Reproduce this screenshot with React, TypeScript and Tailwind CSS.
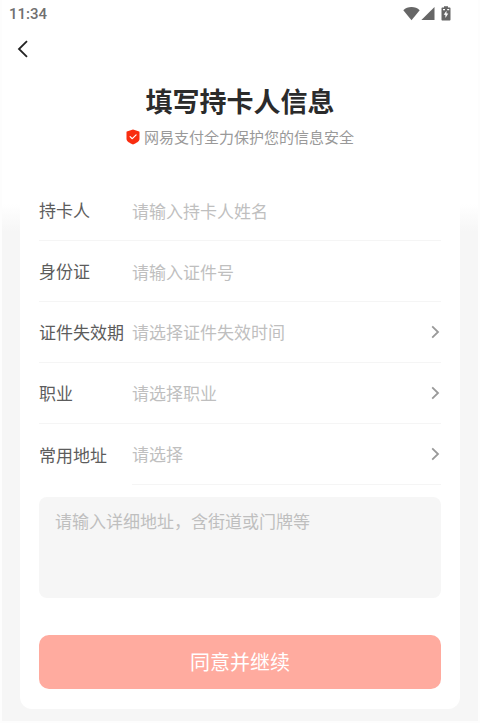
import { useState } from "react";
import type { ReactNode } from "react";

function StatusBar() {
  return (
    <div className="flex h-7 items-center justify-between pl-[7px] pr-[25px] text-[#666666]">
      <span className="font-[Roboto,sans-serif] text-[15px] leading-5 font-medium text-[#707070]">
        11:34
      </span>
      <div className="flex items-center gap-1">
        <div className="flex items-center gap-px">
          <svg className="h-[14px] w-[17px]" viewBox="0 0 17 14" fill="currentColor" aria-hidden="true">
            <path d="M8.5 13.2 0.3 3.2C2.4 1.2 5.3 0.1 8.5 0.1s6.100 1.100 8.200 3.100Z" />
          </svg>
          <svg className="h-[14px] w-[14px]" viewBox="0 0 14 14" fill="currentColor" aria-hidden="true">
            <path d="M13.500 0V13H0.400Z" />
          </svg>
        </div>
        <svg className="h-4 w-[14px]" viewBox="0 0 14 16" aria-hidden="true">
          <path
            fill="currentColor"
            d="M5 0.200h4v1.300h1.500c.6 0 1 .4 1 1v11c0 .6-.4 1-1 1h-7c-.6 0-1-.4-1-1V2.500c0-.6.4-1 1-1H5Z"
          />
          <path fill="#ffffff" d="M4 3h2v1.200H4ZM8.200 3h2v1.200h-2ZM7.500 4.700 4.700 8.700h1.700v3.200l2.900-4.300H7.500Z" />
        </svg>
      </div>
    </div>
  );
}

function ShieldIcon() {
  return (
    <svg className="h-4 w-[14px]" viewBox="0 0 14 16" fill="none" aria-hidden="true">
      <path
        fill="#f92d10"
        d="M7 0.400 13.200 2.400c.2.1.3.3.3.6v7c0 2.300-3.500 4.300-6.500 5.600C4 14.300.5 12.300.5 10V3c0-.3.1-.5.3-.6Z"
      />
      <path
        d="m4.100 7.600 2.200 2.100 3.800-3.800"
        stroke="#ffffff"
        strokeWidth={1.2}
        strokeLinecap="round"
        strokeLinejoin="round"
      />
    </svg>
  );
}

function Row({
  id,
  label,
  inset,
  children,
}: {
  id: string;
  label: string;
  inset?: boolean;
  children: ReactNode;
}) {
  return (
    <div
      className={`flex h-[61px] items-stretch ${inset ? "" : "border-b border-[#f5f5f5]"}`}
    >
      <label
        htmlFor={id}
        className="flex w-[93px] shrink-0 items-center whitespace-nowrap text-[#5c5c5c]"
      >
        {label}
      </label>
      <div
        className={`flex min-w-0 flex-1 items-center ${inset ? "border-b border-[#f5f5f5]" : ""}`}
      >
        {children}
      </div>
    </div>
  );
}

function TextRow({
  id,
  label,
  placeholder,
}: {
  id: string;
  label: string;
  placeholder: string;
}) {
  return (
    <Row id={id} label={label}>
      <input
        id={id}
        type="text"
        placeholder={placeholder}
        className="h-full w-full bg-transparent text-[#333333] outline-none placeholder:text-[#bfbfbf]"
      />
    </Row>
  );
}

function SelectRow({
  id,
  label,
  placeholder,
  options,
  inset,
}: {
  id: string;
  label: string;
  placeholder: string;
  options: string[];
  inset?: boolean;
}) {
  const [value, setValue] = useState("");

  return (
    <Row id={id} label={label} inset={inset}>
      <select
        id={id}
        value={value}
        onChange={(e) => setValue(e.target.value)}
        className={`h-full min-w-0 flex-1 appearance-none bg-transparent outline-none ${
          value ? "text-[#333333]" : "text-[#bfbfbf]"
        }`}
      >
        <option value="" disabled>
          {placeholder}
        </option>
        {options.map((option) => (
          <option key={option} value={option}>
            {option}
          </option>
        ))}
      </select>
      <svg
        className="h-[14px] w-3 shrink-0"
        viewBox="0 0 12 14"
        fill="none"
        stroke="#999999"
        strokeWidth={1.8}
        aria-hidden="true"
      >
        <path d="m3.200 1.400 5.800 5.600-5.800 5.600" />
      </svg>
    </Row>
  );
}

export default function App() {
  return (
    <div className="flex min-h-screen flex-col border-x-2 border-b-2 border-[#fdfdfd] bg-white font-['Noto_Sans_CJK_SC',sans-serif]">
      <StatusBar />
      <nav className="flex h-[42px] items-center pl-[11px]">
        <button type="button" aria-label="返回" className="flex h-8 w-5 items-center justify-center">
          <svg
            className="h-[18px] w-[18px]"
            viewBox="0 0 18 18"
            fill="none"
            stroke="#222222"
            strokeWidth={1.8}
            aria-hidden="true"
          >
            <path d="M13 1.200 5 9l8 7.800" />
          </svg>
        </button>
      </nav>
      <header className="flex flex-col items-center gap-2 pt-[13px] pb-[33px]">
        <h1 className="text-[27px] leading-9 font-bold text-[#2b2b2b]">
          填写持卡人信息
        </h1>
        <p className="flex items-center gap-1 text-[15px] leading-5 text-[#999999]">
          <ShieldIcon />
          网易支付全力保护您的信息安全
        </p>
      </header>

      <main className="flex-1 bg-[linear-gradient(to_bottom,#ffffff_24px,#f6f6f6_52px)] px-[18px] pb-3">
        <form
          className="rounded-xl bg-white px-[19px] pb-5 text-[17px] leading-6"
          onSubmit={(e) => e.preventDefault()}
        >
          <TextRow id="name" label="持卡人" placeholder="请输入持卡人姓名" />
          <TextRow id="id-number" label="身份证" placeholder="请输入证件号" />
          <SelectRow
            id="expiry"
            label="证件失效期"
            placeholder="请选择证件失效时间"
            options={["5年内", "10年内", "20年内", "长期有效"]}
          />
          <SelectRow
            id="job"
            label="职业"
            placeholder="请选择职业"
            options={["企业职员", "公务员", "教师", "学生", "其他"]}
          />
          <SelectRow
            id="region"
            label="常用地址"
            placeholder="请选择"
            options={["北京市", "上海市", "浙江省", "广东省"]}
            inset
          />
          <textarea
            aria-label="详细地址"
            placeholder="请输入详细地址，含街道或门牌等"
            className="mt-3 block h-[101px] w-full resize-none rounded-lg bg-[#f6f6f6] px-4 py-3 text-[#333333] outline-none placeholder:text-[#bfbfbf]"
          />
          <button
            type="submit"
            className="mt-[37px] block h-[54px] w-full rounded-[10px] bg-[#ffab9f] text-[20px] text-white"
          >
            同意并继续
          </button>
        </form>
      </main>
    </div>
  );
}
